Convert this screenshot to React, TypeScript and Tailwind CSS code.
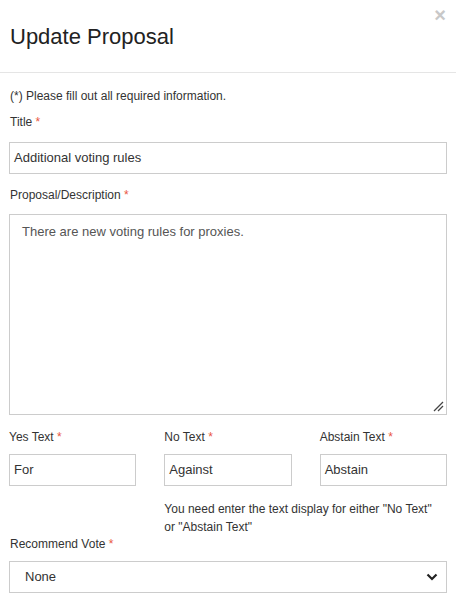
import React from "react";

const Req = () => <span className="text-[#e9573f]"> *</span>;

export default function App() {
  return (
    <div className="w-[456px] h-[602px] bg-white overflow-hidden relative text-[#333] [font-family:'Liberation_Sans',Arial,sans-serif]">
      <button className="absolute right-[10px] top-[5px] text-[20px] leading-none font-bold text-[#c8c8c8]">×</button>
      <div className="h-[73px] border-b border-[#e5e5e5] px-[10px] pt-[24px]">
        <h1 className="text-[22px] leading-[26px] text-[#222]">Update Proposal</h1>
      </div>
      <div className="px-[9px] pt-[15px]">
        <p className="text-[12px] leading-[16px] pl-[1px]">(*) Please fill out all required information.</p>
        <label className="block text-[12px] leading-[16px] mt-[10px] pl-[1px]">Title<Req /></label>
        <div className="mt-[12px] h-[32px] border border-[#ccc] px-[4px] flex items-center text-[13px] text-[#333]">Additional voting rules</div>
        <label className="block text-[12px] leading-[16px] mt-[13px] pl-[1px]">Proposal/Description<Req /></label>
        <div className="mt-[11px] h-[201px] border border-[#ccc] px-[12px] pt-[7px] text-[13px] text-[#555] relative">
          There are new voting rules for proxies.
          <svg className="absolute right-[2px] bottom-[2px]" width="12" height="12" viewBox="0 0 12 12">
            <line x1="2" y1="11" x2="11" y2="2" stroke="#444" strokeWidth="1.2" />
            <line x1="6" y1="11" x2="11" y2="6" stroke="#444" strokeWidth="1.2" />
          </svg>
        </div>
        <div className="grid grid-cols-3 gap-x-[28px] mt-[14px]">
          {[
            ["Yes Text", "For"],
            ["No Text", "Against"],
            ["Abstain Text", "Abstain"],
          ].map(([l, v]) => (
            <div key={l}>
              <label className="block text-[12px] leading-[16px]">{l}<Req /></label>
              <div className="mt-[9px] h-[32px] border border-[#ccc] px-[4px] flex items-center text-[13px]">{v}</div>
            </div>
          ))}
        </div>
        <div className="grid grid-cols-3 gap-x-[28px] mt-[14px]">
          <div />
          <p className="col-span-2 w-[275px] text-[12px] leading-[18px]">You need enter the text display for either "No Text" or "Abstain Text"</p>
        </div>
        <label className="block text-[12px] leading-[16px] pl-[1px]">Recommend Vote<Req /></label>
        <div className="mt-[9px] h-[32px] border border-[#ccc] pl-[15px] pr-[8px] flex items-center justify-between text-[13px]">
          <span>None</span>
          <svg width="12" height="8" viewBox="0 0 12 8">
            <path d="M1.5 1.5 L6 6 L10.5 1.5" fill="none" stroke="#222" strokeWidth="2.2" />
          </svg>
        </div>
      </div>
    </div>
  );
}
